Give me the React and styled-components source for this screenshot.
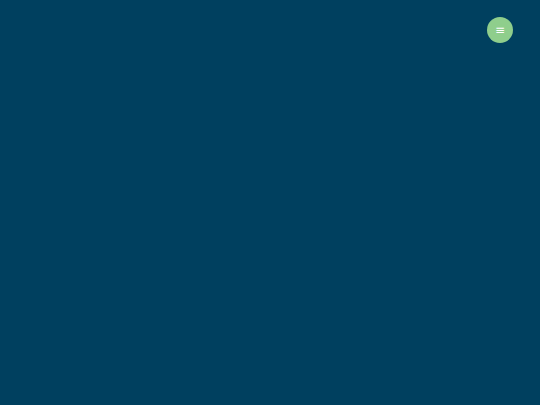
import React from 'react';
import styled, { createGlobalStyle } from 'styled-components';

const GlobalStyle = createGlobalStyle`
  html, body {
    margin: 0;
    padding: 0;
    height: 100%;
    background: #00405f;
    font-family: "Liberation Sans", Arial, sans-serif;
  }
  #root {
    height: 100%;
  }
`;

const Page = styled.div`
  width: 100%;
  height: 100vh;
  background: #00405f;
`;

const Header = styled.header`
  display: flex;
  justify-content: flex-end;
  padding: 17px 27px 0 0;
`;

const MenuButton = styled.button`
  width: 26px;
  height: 26px;
  border-radius: 50%;
  border: 0;
  padding: 0;
  background: #8fce8c;
  color: #ffffff;
  display: flex;
  align-items: center;
  justify-content: center;
  font-family: "DejaVu Sans", sans-serif;
  font-size: 12px;
  line-height: 1;
  cursor: pointer;
`;

export default function App() {
  return (
    <>
      <GlobalStyle />
      <Page>
        <Header>
          <MenuButton aria-label="menu">≡</MenuButton>
        </Header>
      </Page>
    </>
  );
}
